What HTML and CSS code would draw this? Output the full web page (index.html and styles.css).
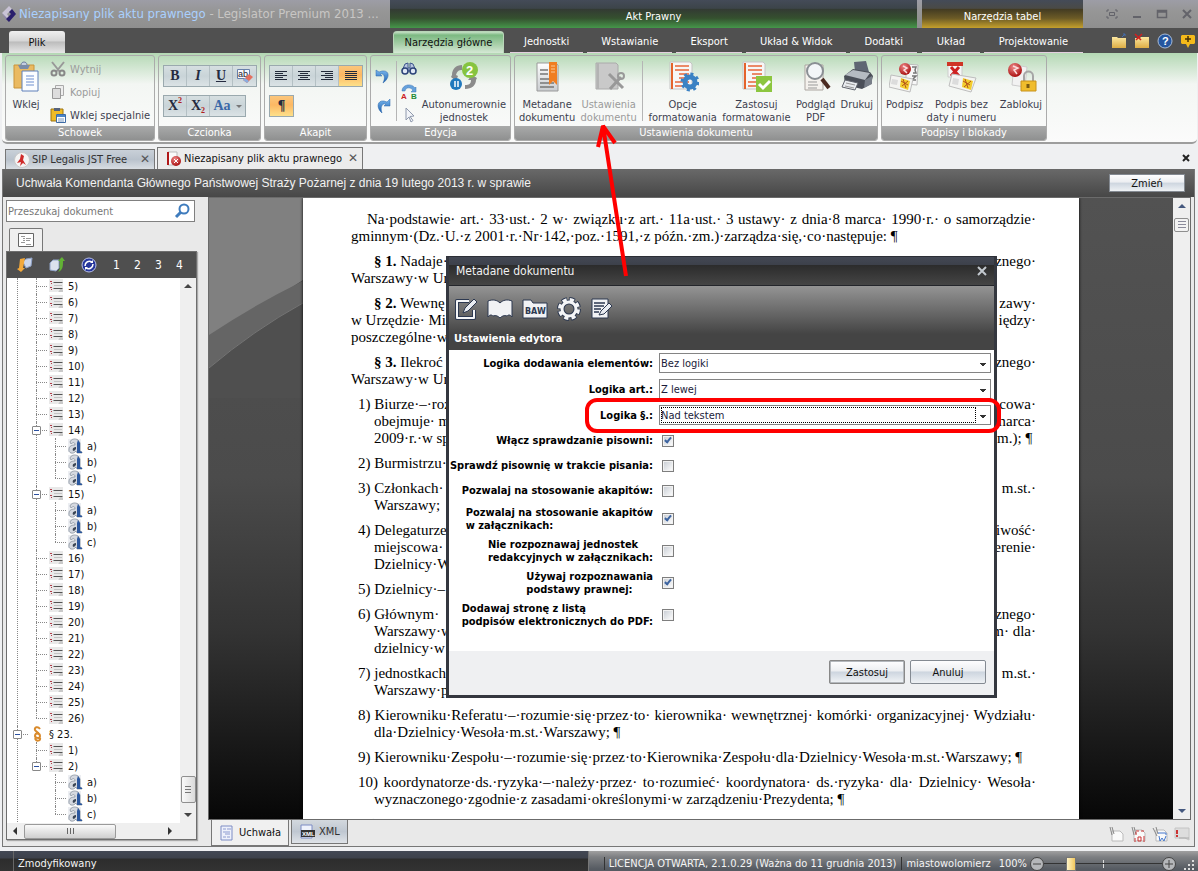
FILE: index.html
```html
<!DOCTYPE html>
<html lang="pl">

<head>
  <meta charset="UTF-8">
  <meta name="viewport" content="width=device-width, initial-scale=1.0">
  <title>Niezapisany plik aktu prawnego - Legislator Premium 2013</title>
  <link rel="stylesheet" href="styles.css">
</head>

<body>
  <svg class="sprite" width="0" height="0" aria-hidden="true">
    <defs>
      <linearGradient id="g-blue" x1="0" y1="0" x2="0" y2="1">
        <stop offset="0" stop-color="#7ab8ee" />
        <stop offset="1" stop-color="#1d5fae" />
      </linearGradient>
      <linearGradient id="g-gold" x1="0" y1="0" x2="0" y2="1">
        <stop offset="0" stop-color="#fbe7a0" />
        <stop offset="1" stop-color="#dfae45" />
      </linearGradient>
      <linearGradient id="g-light" x1="0" y1="0" x2="0" y2="1">
        <stop offset="0" stop-color="#ffffff" />
        <stop offset="1" stop-color="#c9ccd0" />
      </linearGradient>
      <radialGradient id="g-red" cx=".4" cy=".3" r=".7">
        <stop offset="0" stop-color="#e88" />
        <stop offset="1" stop-color="#a11" />
      </radialGradient>
    </defs>
    <symbol id="i-list" viewBox="0 0 16 16">
      <path d="M1 1h14v13l-3-2-3 2H1z" fill="#e9e9e9" />
      <path d="M10 14l3-4 2 2v2z" fill="#c9c9c9" />
      <path d="M5.500 4.500h9M5.500 10.500h9" stroke="#555" />
      <path d="M6 7.500h8" stroke="#c4c4c4" />
      <path d="M2 3.500h2M3 5.500h1M2 9.500h2M3 11.500h1" stroke="#b23c4a" />
    </symbol>
    <symbol id="i-letter" viewBox="0 0 16 16">
      <path d="M1 1h13v13H1z" fill="#eceef2" />
      <path d="M3 4c1-3 5-4 8-2l2 3v8l2 1v1h-5l-1-2c-3 4-8 2-7-2 0-3 3-4 6-4 0-3-2-3-4-1z" fill="#d5d9e0" stroke="#7d8694" stroke-width=".7" />
      <path d="M11 2l2 3v8l2 1v1h-5V5z" fill="#2b579e" />
      <path d="M9 9c-4 0-4 4-2 4l2-2z" fill="#3a4554" />
    </symbol>
    <symbol id="i-section" viewBox="0 0 16 16">
      <path d="M11 3C9 0 5 1 6 4c1 2 5 3 5 6s-5 2-5 0 2-3 4-3M10 8c-3-1-4 0-4 2M6 12c1 4 6 3 5 0" fill="none" stroke="#d98a2b" stroke-width="2" />
    </symbol>
    <symbol id="i-seal" viewBox="0 0 32 32">
      <path d="M17 3l12 1-1 20-11-1z" fill="#f7f7f7" stroke="#bbb" />
      <path d="M23 6h4l-1 3 1 3h-3M23 15h4l-4 4h4" stroke="#777" stroke-width="1.500" fill="none" />
      <circle cx="16" cy="8" r="6" fill="url(#g-red)" />
      <path d="M14 5l4 2-3 2 3 3" stroke="#fbdcdc" stroke-width="1.500" fill="none" />
      <path d="M2 14l22 4-3 13-21-5z" fill="#f4f4f2" stroke="#bdbdbd" />
      <path d="M3 18l6 1-1 5-6-1z" fill="#dcdcdc" />
      <path d="M12 17l9 3-2 9-8-3z" fill="#f2cc2c" />
      <path d="M12 20l7 4M14 18l3 9M19 20l-6 5" stroke="#b5531c" />
    </symbol>
    <symbol id="i-lines" viewBox="0 0 32 32">
      <path d="M3 1h20l2 2v25H3z" fill="#f6f6f6" stroke="#c4c4c4" />
      <path d="M5 2v26" stroke="#e4632b" stroke-width="2" />
      <path d="M8 5h14M8 9h14M12 13h10M12 17h10M8 21h14M8 25h10" stroke="#e8663a" stroke-width="1.500" />
    </symbol>
  </svg>

  <div class="app">
    <header class="title">
      <div class="title__main">
        <svg class="title__logo" viewBox="0 0 16 18">
          <path d="M1 8L8 1l3 3-5 5 2 3-3 2z" fill="#c9c3d6" />
          <path d="M1 8l5 5-1 2z" fill="#8d85a5" />
          <path d="M11 4l4 5-7 8-3-3 5-5-2-2z" fill="#2a1f6c" />
        </svg>
        <h1 class="title__text"><span>Niezapisany plik aktu prawnego</span> - Legislator Premium 2013 ...</h1>
      </div>
      <div class="title__context title__context--act">Akt Prawny</div>
      <div class="title__context title__context--table">Narzędzia tabel</div>
      <div class="title__window">
        <button class="title__btn" aria-label="Pełny ekran"><svg viewBox="0 0 12 10"><path d="M1 3V1h2M9 1h2v2M11 7v2H9M3 9H1V7M3.500 3.500h5v3h-5z" /></svg></button>
        <button class="title__btn" aria-label="Minimalizuj"><svg viewBox="0 0 12 10"><path d="M2 8h8" stroke-width="2" /></svg></button>
        <button class="title__btn" aria-label="Maksymalizuj"><svg viewBox="0 0 12 10"><path d="M1.500 1.500h9v7h-9zM1 3h10" stroke-width="1.500" /></svg></button>
        <button class="title__btn" aria-label="Zamknij"><svg viewBox="0 0 12 10"><path d="M2 1l8 8M10 1L2 9" stroke-width="2" /></svg></button>
      </div>
    </header>

    <nav class="tabs">
      <div class="tabs__file"><button class="tabs__plik">Plik</button></div>
      <div class="tabs__group tabs__group--act">
        <button class="tabs__tab tabs__tab--active">Narzędzia główne</button>
        <button class="tabs__tab">Jednostki</button>
        <button class="tabs__tab">Wstawianie</button>
        <button class="tabs__tab">Eksport</button>
        <button class="tabs__tab">Układ &amp; Widok</button>
        <button class="tabs__tab">Dodatki</button>
      </div>
      <div class="tabs__group tabs__group--table">
        <button class="tabs__tab">Układ</button>
        <button class="tabs__tab">Projektowanie</button>
      </div>
      <div class="tabs__quick">
        <button class="icon-btn" aria-label="Otwórz"><svg viewBox="0 0 16 16"><path d="M1 4h5l1 1h8v10H1z" fill="url(#g-gold)" /><path d="M11 4l3-3M12 1h2v2" stroke="#456fb0" fill="none" /></svg></button>
        <button class="icon-btn" aria-label="Zamknij plik"><svg viewBox="0 0 16 16"><path d="M1 5h5l1-1h8v11H1z" fill="url(#g-gold)" /><path d="M1 1l6 6M8 1L2 7" stroke="#d11f1f" stroke-width="1.500" /></svg></button>
        <button class="icon-btn" aria-label="Pomoc"><svg viewBox="0 0 16 16"><circle cx="8" cy="8" r="7" fill="#2456a0" stroke="#a9bbd4" /><text x="5" y="12" class="svg-help">?</text></svg></button>
        <button class="icon-btn" aria-label="Nowości"><svg viewBox="0 0 16 16"><path d="M2 2h12l1 1v7l-1 1H10l-2 4-2-4H2l-1-1V3z" fill="#f5ba1a" /><path d="M8 3v6M5 6h6" stroke="#463006" stroke-width="1.500" /></svg></button>
      </div>
    </nav>

    <section class="ribbon">
      <div class="group group--clipboard">
        <div class="group__body">
          <button class="big">
            <svg class="big__icon" viewBox="0 0 32 32">
              <path d="M4 4h20v23H4z" fill="#eaba61" stroke="#c9943b" />
              <path d="M8 4h12l-2 4h-8z" fill="#7a8ca8" />
              <path d="M11 4c0-4 6-4 6 0" fill="#c3cde0" stroke="#6c7f9e" />
              <path d="M12 10h16v20H12z" fill="#fbfdff" stroke="#5f80b9" />
              <path d="M16 15h8M16 18h8M16 21h8M16 24h8" stroke="#6c8fd0" />
            </svg>
            <span>Wklej</span>
          </button>
          <div class="group__stack">
            <button class="small" disabled><svg viewBox="0 0 16 16"><path d="M2 1l8 10M14 1L6 11" stroke="#999" stroke-width="2" /><circle cx="4" cy="12" r="2.500" fill="none" stroke="#888" stroke-width="2" /><circle cx="12" cy="12" r="2.500" fill="none" stroke="#888" stroke-width="2" /></svg>Wytnij</button>
            <button class="small" disabled><svg viewBox="0 0 16 16"><path d="M5.500 1.500h8v10h-8z" fill="#eee" stroke="#aaa" /><path d="M2.500 4.500h8v10h-8z" fill="#ddd" stroke="#999" /></svg>Kopiuj</button>
            <button class="small"><svg viewBox="0 0 16 16"><path d="M1 2h12v12H1z" fill="#f0bb26" stroke="#9c7413" /><path d="M4 1h6v3H4z" fill="#56627a" /><path d="M6.500 7.500h9v8h-9z" fill="#fff" stroke="#3e6ba5" /><path d="M7 9h8" stroke="#4c86c9" stroke-width="2" /><path d="M8 12h6M8 14h6" stroke="#7b9bc4" /></svg>Wklej specjalnie</button>
          </div>
        </div>
        <h2 class="group__caption">Schowek</h2>
      </div>

      <div class="group group--font">
        <div class="group__body group__body--rows">
          <div class="bar">
            <button class="bar__btn bar__btn--b">B</button>
            <button class="bar__btn bar__btn--i">I</button>
            <button class="bar__btn bar__btn--u">U</button>
            <button class="bar__btn" aria-label="Wyczyść formatowanie"><svg viewBox="0 0 16 16"><path d="M.5 1.500h12v9H.5z" fill="#f7faff" stroke="#6880aa" /><text x="1" y="9" class="svg-ab">ab</text><path d="M6 12l6-6 4 3-6 6z" fill="#e4705f" /><path d="M6 12l2-2 4 3-2 2z" fill="#89aee0" /></svg></button>
          </div>
          <div class="bar">
            <button class="bar__btn">X<sup>2</sup></button>
            <button class="bar__btn">X<sub>2</sub></button>
            <button class="bar__btn bar__btn--case">Aa <i class="caret"></i></button>
          </div>
        </div>
        <h2 class="group__caption">Czcionka</h2>
      </div>

      <div class="group group--font">
        <div class="group__body group__body--rows">
          <div class="bar">
            <button class="bar__btn" aria-label="Do lewej"><svg viewBox="0 0 16 16"><path d="M2 3.500h12M2 5.500h8M2 7.500h12M2 9.500h8M2 11.500h12" stroke="#222a3a" /></svg></button>
            <button class="bar__btn" aria-label="Wyśrodkuj"><svg viewBox="0 0 16 16"><path d="M2 3.500h12M4 5.500h8M2 7.500h12M4 9.500h8M2 11.500h12" stroke="#222a3a" /></svg></button>
            <button class="bar__btn" aria-label="Do prawej"><svg viewBox="0 0 16 16"><path d="M2 3.500h12M6 5.500h8M2 7.500h12M6 9.500h8M2 11.500h12" stroke="#222a3a" /></svg></button>
            <button class="bar__btn bar__btn--on" aria-label="Wyjustuj"><svg viewBox="0 0 16 16"><path d="M2 3.500h12M2 5.500h12M2 7.500h12M2 9.500h12M2 11.500h12" stroke="#222a3a" /></svg></button>
          </div>
          <div class="bar">
            <button class="bar__btn bar__btn--on">¶</button>
          </div>
        </div>
        <h2 class="group__caption">Akapit</h2>
      </div>

      <div class="group group--edit">
        <div class="group__body">
          <div class="group__icons group__icons--wide">
            <button class="icon-btn" aria-label="Cofnij"><svg viewBox="0 0 16 16"><path d="M1 2v6h6L5 6c4-1 6 3 3 9 7-5 7-13-1-12L4 4z" fill="url(#g-blue)" stroke="#2b66ad" stroke-width=".5" /></svg></button>
            <button class="icon-btn" aria-label="Ponów"><svg viewBox="0 0 16 16"><path d="M15 1v7H9l2-2C7 5 5 9 7 15 1 10 2 2 9 3l3 1z" fill="url(#g-blue)" stroke="#2b66ad" stroke-width=".5" /></svg></button>
          </div>
          <i class="group__sep"></i>
          <div class="group__icons">
            <button class="icon-btn" aria-label="Znajdź"><svg viewBox="0 0 16 16"><path d="M4 3l3-1v5h2V2l3 1 3 7H1z" fill="#b8c5e0" stroke="#3e568c" /><circle cx="4" cy="10" r="3" fill="#dfe7f5" stroke="#2c4379" stroke-width="1.500" /><circle cx="12" cy="10" r="3" fill="#dfe7f5" stroke="#2c4379" stroke-width="1.500" /></svg></button>
            <button class="icon-btn" aria-label="Zamień"><svg viewBox="0 0 16 16"><path d="M1 7c0-7 10-8 13-3l1-1v5h-5l2-2C9 3 5 3 4 7z" fill="#66a1dc" stroke="#3974b4" stroke-width=".5" /><text x="0" y="15" class="svg-a">A</text><text x="10" y="15" class="svg-b">B</text></svg></button>
            <button class="icon-btn" aria-label="Zaznacz"><svg viewBox="0 0 16 16"><path d="M5 1l8 8-4 .5 3 4-2 1.500-2-5-3 3z" fill="#f2f4f8" stroke="#8e98ac" /></svg></button>
          </div>
          <button class="big">
            <svg class="big__icon" viewBox="0 0 32 32">
              <path d="M3 16l5 4 2-5-2-1c1-4 3-5 6-5V4C8 4 4 8 4 14z" fill="#8b8b8b" />
              <path d="M29 17l-5-3-4 5h3c0 4-2 5-6 5v4c7 0 11-4 11-9z" fill="#8b8b8b" />
              <circle cx="22" cy="9" r="8" fill="#86c440" />
              <circle cx="8" cy="23" r="6" fill="#2179bd" />
              <path d="M7 20v6M10 20v6" stroke="#fff" stroke-width="1.500" />
              <text x="18" y="14" class="svg-two">2</text>
            </svg>
            <span>Autonumerownie<br>jednostek</span>
          </button>
        </div>
        <h2 class="group__caption">Edycja</h2>
      </div>

      <div class="group group--doc">
        <div class="group__body">
          <button class="big">
            <svg class="big__icon" viewBox="0 0 32 32">
              <path d="M6 2h18l3 2v26H6z" fill="url(#g-light)" stroke="#999" />
              <path d="M9 9h8M9 13h8M9 18h14M9 22h14M9 26h14" stroke="#777" stroke-width="1.500" />
              <path d="M18 1h8v23l-4-4-4 4z" fill="#f07e22" />
              <path d="M20 5h4M20 8h4M20 11h4" stroke="#fbc896" />
            </svg>
            <span>Metadane<br>dokumentu</span>
          </button>
          <button class="big" disabled>
            <svg class="big__icon" viewBox="0 0 32 32">
              <path d="M3 2h20l2 2v24H3z" fill="#c9c9c9" stroke="#aaa" />
              <path d="M5 2v26" stroke="#b3b3b3" stroke-width="2" />
              <path d="M16 13l14 14M17 28l11-12" stroke="#999" stroke-width="3" />
              <circle cx="28" cy="15" r="3" fill="none" stroke="#999" stroke-width="2" />
            </svg>
            <span>Ustawienia<br>dokumentu</span>
          </button>
          <i class="group__sep"></i>
          <button class="big">
            <svg class="big__icon" viewBox="0 0 32 32">
              <use href="#i-lines" />
              <circle cx="23" cy="21" r="5" fill="none" stroke="#3b82c4" stroke-width="5" />
              <circle cx="23" cy="21" r="8" fill="none" stroke="#3b82c4" stroke-width="3" stroke-dasharray="3 3.300" />
            </svg>
            <span>Opcje<br>formatowania</span>
          </button>
          <button class="big">
            <svg class="big__icon" viewBox="0 0 32 32">
              <use href="#i-lines" />
              <path d="M16 15h16v16H16z" fill="#8cc63f" />
              <path d="M19 23l4 4 7-7" stroke="#fff" stroke-width="3" fill="none" />
            </svg>
            <span>Zastosuj<br>formatowanie</span>
          </button>
          <button class="big">
            <svg class="big__icon" viewBox="0 0 32 32">
              <path d="M5 4h18v25H5z" fill="#f4f1ed" stroke="#aba5a0" />
              <path d="M8 21h9M8 24h10M8 27h9" stroke="#999" />
              <path d="M22 18l7 9" stroke="#4a2a20" stroke-width="4" />
              <circle cx="15" cy="10" r="8" fill="#f3f6f8" stroke="#8a8f94" stroke-width="2" />
            </svg>
            <span>Podgląd<br>PDF</span>
          </button>
          <button class="big">
            <svg class="big__icon" viewBox="0 0 32 32">
              <path d="M13 1l12-1 3 11H14z" fill="#5f6673" />
              <path d="M3 15l9-7 17 3 3 4-2 8-9 5-17-4z" fill="#4b4f58" />
              <path d="M4 14l8-5 17 3-5 7z" fill="#b6bbc2" />
              <path d="M24 19l7-4v8l-8 4z" fill="#787e88" />
              <path d="M4 19l13 3-3 7-13-3z" fill="#e9ecef" stroke="#61656d" />
              <path d="M5 22l9 2M4 25l9 2" stroke="#999" />
            </svg>
            <span>Drukuj</span>
          </button>
        </div>
        <h2 class="group__caption">Ustawienia dokumentu</h2>
      </div>

      <div class="group group--sign">
        <div class="group__body">
          <button class="big">
            <svg class="big__icon" viewBox="0 0 32 32"><use href="#i-seal" /></svg>
            <span>Podpisz</span>
          </button>
          <button class="big">
            <svg class="big__icon" viewBox="0 0 32 32">
              <path d="M3 2h14v14H3z" fill="#f6f6f6" stroke="#ccc" />
              <path d="M2 1h16v4H2z" fill="#cf3426" />
              <path d="M6 6l8 9M14 6l-8 9" stroke="#cf2020" stroke-width="3" />
              <path d="M7 13l24 4-5 14L4 25z" fill="#f4f4f2" stroke="#bdbdbd" />
              <path d="M8 17l6 1-1 6-6-1z" fill="#dcdcdc" />
              <path d="M18 17l10 3-2 9-9-3z" fill="#f2cc2c" />
              <path d="M18 20l7 4M20 18l3 9M26 20l-7 6" stroke="#b5531c" />
            </svg>
            <span>Podpis bez<br>daty i numeru</span>
          </button>
          <button class="big">
            <svg class="big__icon" viewBox="0 0 32 32">
              <path d="M9 4l13 2-2 20-13-2z" fill="#f2f2f2" stroke="#ccc" />
              <circle cx="10" cy="9" r="7" fill="url(#g-red)" />
              <path d="M8 5l5 2-4 2 3 4" stroke="#fbdcdc" stroke-width="1.500" fill="none" />
              <path d="M19 21v-6c0-6 9-6 9 0v6" fill="none" stroke="#a6a6a6" stroke-width="2" />
              <path d="M16 20h15v10H16z" fill="#f0bd2d" stroke="#c8921a" />
              <path d="M23 23v4" stroke="#7b5a11" stroke-width="3" />
            </svg>
            <span>Zablokuj</span>
          </button>
        </div>
        <h2 class="group__caption">Podpisy i blokady</h2>
      </div>
    </section>

    <nav class="files">
      <button class="files__tab">
        <svg viewBox="0 0 16 16"><circle cx="8" cy="8" r="7.500" fill="#f4f4f4" stroke="#c9c9c9" /><path d="M7 2l3 2-1 4 3 5-3-2-3 3 1-4-4 1 3-4z" fill="#cf2a2a" /></svg>
        SIP Legalis JST Free <span class="files__x">✕</span>
      </button>
      <button class="files__tab files__tab--active">
        <svg viewBox="0 0 16 16"><path d="M2 1h9v13H2z" fill="#fafafa" stroke="#bbb" /><path d="M2 1v13" stroke="#b01818" stroke-width="2" /><circle cx="10" cy="10" r="5" fill="url(#g-red)" /><path d="M8 8l4 4M12 8l-4 4" stroke="#fff" /></svg>
        Niezapisany plik aktu prawnego <span class="files__x">✕</span>
      </button>
      <button class="files__close" aria-label="Zamknij kartę"><svg viewBox="0 0 8 8"><path d="M1 1l6 6M7 1L1 7" stroke="#222" stroke-width="2" /></svg></button>
    </nav>

    <main class="work">
      <div class="work__head">
        <p class="work__name">Uchwała Komendanta Głównego Państwowej Straży Pożarnej z dnia 19 lutego 2013 r. w sprawie</p>
        <button class="push push--flat">Zmień</button>
      </div>

      <div class="work__body">
        <aside class="side">
          <div class="search">
            <input class="search__input" type="text" placeholder="Przeszukaj dokument" aria-label="Przeszukaj dokument">
            <svg class="search__icon" viewBox="0 0 16 16"><circle cx="10" cy="6" r="4.500" fill="none" stroke="#3f7cbd" stroke-width="2" /><path d="M7 9l-5 5" stroke="#3f7cbd" stroke-width="3" /></svg>
          </div>
          <button class="side__tab" aria-label="Struktura"><svg viewBox="0 0 16 14"><path d="M.5.500h15v13H.5z" fill="#fff" stroke="#666" /><path d="M3 3.500h4M5 5.500h2M8 5.500h5M5 7.500h2M8 7.500h4M3 9.500h4M8 11.500h5" stroke="#999" /></svg></button>
          <div class="panel">
            <div class="panel__bar">
              <button class="icon-btn" aria-label="Zwiń"><svg viewBox="0 0 16 16"><path d="M6 5l3-3 6-1-1 8-5 2z" fill="#ccd6ea" stroke="#8fa2c7" /><path d="M3 2l5-1-2 10 2 0-4 4-4-3 2-1z" fill="#f3a93b" /></svg></button>
              <button class="icon-btn" aria-label="Rozwiń"><svg viewBox="0 0 16 16"><path d="M1 6l3-3h6v8l-3 3-6-1z" fill="#dbe2ee" stroke="#8fa2c7" /><path d="M9 15c3-3 1-6 2-11H9l4-4 3 4h-2c0 5 0 9-5 11z" fill="#62b235" /></svg></button>
              <button class="icon-btn" aria-label="Odśwież"><svg viewBox="0 0 16 16"><circle cx="8" cy="8" r="7" fill="#27379c" stroke="#b9c1e8" /><path d="M4 9c0-4 4-6 7-4M12 7c0 4-4 6-7 4" fill="none" stroke="#fff" stroke-width="1.500" /><path d="M9 6l3 0V3zM7 10H4v3z" fill="#fff" /></svg></button>
              <button class="panel__level">1</button>
              <button class="panel__level">2</button>
              <button class="panel__level">3</button>
              <button class="panel__level">4</button>
            </div>
            <div class="panel__view">
              <ul class="tree">
                <li class="tree__node">
                  <ul class="tree__sub">
                    <li class="tree__node"><span class="tree__row"><svg><use href="#i-list" /></svg>5)</span></li>
                    <li class="tree__node"><span class="tree__row"><svg><use href="#i-list" /></svg>6)</span></li>
                    <li class="tree__node"><span class="tree__row"><svg><use href="#i-list" /></svg>7)</span></li>
                    <li class="tree__node"><span class="tree__row"><svg><use href="#i-list" /></svg>8)</span></li>
                    <li class="tree__node"><span class="tree__row"><svg><use href="#i-list" /></svg>9)</span></li>
                    <li class="tree__node"><span class="tree__row"><svg><use href="#i-list" /></svg>10)</span></li>
                    <li class="tree__node"><span class="tree__row"><svg><use href="#i-list" /></svg>11)</span></li>
                    <li class="tree__node"><span class="tree__row"><svg><use href="#i-list" /></svg>12)</span></li>
                    <li class="tree__node"><span class="tree__row"><svg><use href="#i-list" /></svg>13)</span></li>
                    <li class="tree__node"><span class="tree__row tree__row--open"><svg><use href="#i-list" /></svg>14)</span>
                      <ul class="tree__sub">
                        <li class="tree__node"><span class="tree__row"><svg><use href="#i-letter" /></svg>a)</span></li>
                        <li class="tree__node"><span class="tree__row"><svg><use href="#i-letter" /></svg>b)</span></li>
                        <li class="tree__node"><span class="tree__row"><svg><use href="#i-letter" /></svg>c)</span></li>
                      </ul>
                    </li>
                    <li class="tree__node"><span class="tree__row tree__row--open"><svg><use href="#i-list" /></svg>15)</span>
                      <ul class="tree__sub">
                        <li class="tree__node"><span class="tree__row"><svg><use href="#i-letter" /></svg>a)</span></li>
                        <li class="tree__node"><span class="tree__row"><svg><use href="#i-letter" /></svg>b)</span></li>
                        <li class="tree__node"><span class="tree__row"><svg><use href="#i-letter" /></svg>c)</span></li>
                      </ul>
                    </li>
                    <li class="tree__node"><span class="tree__row"><svg><use href="#i-list" /></svg>16)</span></li>
                    <li class="tree__node"><span class="tree__row"><svg><use href="#i-list" /></svg>17)</span></li>
                    <li class="tree__node"><span class="tree__row"><svg><use href="#i-list" /></svg>18)</span></li>
                    <li class="tree__node"><span class="tree__row"><svg><use href="#i-list" /></svg>19)</span></li>
                    <li class="tree__node"><span class="tree__row"><svg><use href="#i-list" /></svg>20)</span></li>
                    <li class="tree__node"><span class="tree__row"><svg><use href="#i-list" /></svg>21)</span></li>
                    <li class="tree__node"><span class="tree__row"><svg><use href="#i-list" /></svg>22)</span></li>
                    <li class="tree__node"><span class="tree__row"><svg><use href="#i-list" /></svg>23)</span></li>
                    <li class="tree__node"><span class="tree__row"><svg><use href="#i-list" /></svg>24)</span></li>
                    <li class="tree__node"><span class="tree__row"><svg><use href="#i-list" /></svg>25)</span></li>
                    <li class="tree__node"><span class="tree__row"><svg><use href="#i-list" /></svg>26)</span></li>
                  </ul>
                </li>
                <li class="tree__node tree__node--on"><span class="tree__row tree__row--open"><svg><use href="#i-section" /></svg>§ 23.</span>
                  <ul class="tree__sub">
                    <li class="tree__node"><span class="tree__row"><svg><use href="#i-list" /></svg>1)</span></li>
                    <li class="tree__node"><span class="tree__row tree__row--open"><svg><use href="#i-list" /></svg>2)</span>
                      <ul class="tree__sub">
                        <li class="tree__node"><span class="tree__row"><svg><use href="#i-letter" /></svg>a)</span></li>
                        <li class="tree__node"><span class="tree__row"><svg><use href="#i-letter" /></svg>b)</span></li>
                        <li class="tree__node"><span class="tree__row"><svg><use href="#i-letter" /></svg>c)</span></li>
                      </ul>
                    </li>
                  </ul>
                </li>
              </ul>
              <div class="vscroll vscroll--low">
                <i class="arrow arrow--up"></i>
                <i class="vscroll__thumb"></i>
                <i class="arrow arrow--down"></i>
              </div>
            </div>
            <div class="hscroll">
              <i class="arrow arrow--left"></i>
              <i class="hscroll__thumb"></i>
              <i class="arrow arrow--right"></i>
            </div>
          </div>
        </aside>

        <section class="editor">
          <div class="editor__view">
            <div class="desk">
              <svg class="desk__curve" viewBox="0 0 964 200" preserveAspectRatio="xMinYMin slice" aria-hidden="true">
                <path d="M0 0H500L94 82Q40 115 0 170z" fill="#808080" />
                <path d="M0 137Q45 107 94 83V105Q45 132 0 170z" fill="#656565" />
                <path d="M0 170Q45 132 94 105V200H0z" fill="#4f4f4f" />
                <path d="M0 170Q45 132 94 105" fill="none" stroke="#747474" />
              </svg>
              <article class="paper">
                <div class="para para--lead">
                  <p class="line">Na·podstawie· art.· 33·ust.· 2 w· związku·z art.· 11a·ust.· 3 ustawy· z dnia·8 marca· 1990·r.· o samorządzie·</p>
                  <p class="line line--end">gminnym·(Dz.·U.·z 2001·r.·Nr·142,·poz.·1591,·z późn.·zm.)·zarządza·się,·co·następuje: ¶</p>
                </div>
                <div class="para para--section">
                  <p class="line line--cut"><span><b>§ 1.</b> Nadaje·</span><span>znego·</span></p>
                  <p class="line line--end">Warszawy·w Urz</p>
                </div>
                <div class="para para--section">
                  <p class="line line--cut"><span><b>§ 2.</b> Wewnę</span><span>zawy·</span></p>
                  <p class="line line--cut"><span>w Urzędzie· Mia</span><span>iędzy·</span></p>
                  <p class="line line--end">poszczególne·w</p>
                </div>
                <div class="para para--section">
                  <p class="line line--cut"><span><b>§ 3.</b> Ilekroć</span><span>znego·</span></p>
                  <p class="line line--end">Warszawy·w Urz</p>
                </div>
                <div class="para para--item">
                  <p class="line line--cut"><span>1) Biurze·–·roz</span><span>cowa·</span></p>
                  <p class="line line--cut"><span>obejmuje· m</span><span>marca·</span></p>
                  <p class="line line--cut"><span>2009·r.·w spr</span><span>m.); ¶&nbsp;</span></p>
                </div>
                <div class="para para--item">
                  <p class="line line--end">2) Burmistrzu·</p>
                </div>
                <div class="para para--item">
                  <p class="line line--cut"><span>3) Członkach·</span><span>m.st.·</span></p>
                  <p class="line line--end">Warszawy;</p>
                </div>
                <div class="para para--item">
                  <p class="line line--cut"><span>4) Delegaturze</span><span>iwość·</span></p>
                  <p class="line line--cut"><span>miejscowa·</span><span>erenie·</span></p>
                  <p class="line line--end">Dzielnicy·W</p>
                </div>
                <div class="para para--item">
                  <p class="line line--end">5) Dzielnicy·–·</p>
                </div>
                <div class="para para--item">
                  <p class="line line--cut"><span>6) Głównym·</span><span>znego·</span></p>
                  <p class="line line--cut"><span>Warszawy·w</span><span>m· dla·</span></p>
                  <p class="line line--end">dzielnicy·w</p>
                </div>
                <div class="para para--item">
                  <p class="line line--cut"><span>7) jednostkach</span><span>m.st.·</span></p>
                  <p class="line line--end">Warszawy·p</p>
                </div>
                <div class="para para--item">
                  <p class="line">8) Kierowniku·Referatu·–·rozumie·się·przez·to· kierownika· wewnętrznej· komórki· organizacyjnej· Wydziału·</p>
                  <p class="line line--end">dla·Dzielnicy·Wesoła·m.st.·Warszawy; ¶</p>
                </div>
                <div class="para para--item">
                  <p class="line line--end">9) Kierowniku·Zespołu·–·rozumie·się·przez·to·Kierownika·Zespołu·dla·Dzielnicy·Wesoła·m.st.·Warszawy; ¶</p>
                </div>
                <div class="para para--item">
                  <p class="line">10) koordynatorze·ds.·ryzyka·–·należy·przez· to·rozumieć· koordynatora· ds.·ryzyka· dla· Dzielnicy· Wesoła·</p>
                  <p class="line line--end">wyznaczonego·zgodnie·z zasadami·określonymi·w zarządzeniu·Prezydenta; ¶</p>
                </div>
                <div class="para para--item">
                  <p class="line">11) koordynatorach· komórek· Urzędu· Dzielnicy· –· rozumie· się· Wydziały· dla· Dzielnicy· Wesoła·</p>
                </div>
              </article>
            </div>
            <div class="vscroll vscroll--doc">
              <i class="arrow arrow--up"></i>
              <i class="vscroll__thumb"></i>
              <i class="arrow arrow--down"></i>
            </div>
          </div>
          <div class="editor__foot">
            <button class="view-tab view-tab--active"><svg viewBox="0 0 16 16"><path d="M2 1h11v14H2z" fill="#eef1fb" stroke="#7d8cc4" /><path d="M4 4h3M8 4h4M4 7h7M6 9h5M4 12h3M8 12h3" stroke="#8d9bd0" /></svg>Uchwała</button>
            <button class="view-tab"><svg viewBox="0 0 16 16"><path d="M2 1h11v13H2z" fill="#eef1fb" stroke="#7d8cc4" /><path d="M2 6h14v7H2z" fill="#333" /><text x="3" y="12" class="svg-xml">XML</text></svg>XML</button>
            <div class="editor__tools">
              <svg viewBox="0 0 16 16"><path d="M4 5h8l3 3v7H4z" fill="#fafafa" stroke="#bbb" /><path d="M2 1l2 8M4 1l2 7" stroke="#888" fill="none" /></svg>
              <svg viewBox="0 0 16 16"><path d="M4 4h8l3 3v8H4z" fill="#fafafa" stroke="#bbb" /><path d="M2 1l2 8M4 1l2 7" stroke="#888" /><path d="M6 5h3M11 5h3M6 9v-3M5 12v4M8 11h3v4H8zM14 10v6" fill="none" stroke="#c33" /></svg>
              <svg viewBox="0 0 16 16"><path d="M4 4h8l3 3v8H4z" fill="#fafafa" stroke="#bbb" /><path d="M1 2l4 8M4 1l2 7" stroke="#888" /><path d="M6 7h8v2M7 10l1 5 2-3 2 3 2-5" fill="none" stroke="#47c" /></svg>
              <svg viewBox="0 0 16 16"><path d="M1 2h14v12l-4-2H1z" fill="#ddd" stroke="#c4c4c4" /><path d="M3 4v4M3 9v2" stroke="#c33" stroke-width="2" /><path d="M5 12h10" stroke="#aaa" /></svg>
            </div>
          </div>
        </section>
      </div>
    </main>

    <footer class="status">
      <div class="status__state">Zmodyfikowany</div>
      <div class="status__info">
        <span class="status__cell">LICENCJA OTWARTA, 2.1.0.29 (Ważna do 11 grudnia 2013)</span>
        <span class="status__cell">miastowolomierz</span>
        <label class="status__zoom" for="zoom">100%</label>
        <button class="round" aria-label="Pomniejsz"><svg viewBox="0 0 14 14"><circle cx="7" cy="7" r="6.500" /><path d="M3 7h8" /></svg></button>
        <input class="zoom" id="zoom" type="range" min="10" max="400" value="90">
        <button class="round" aria-label="Powiększ"><svg viewBox="0 0 14 14"><circle cx="7" cy="7" r="6.500" /><path d="M3 7h8M7 3v8" /></svg></button>
        <svg class="status__grip" viewBox="0 0 12 12"><path d="M8 2h2v2H8zM4 6h2v2H4zM8 6h2v2H8zM0 10h2v2H0zM4 10h2v2H4zM8 10h2v2H8z" fill="#ddd" /></svg>
      </div>
    </footer>
  </div>

  <div class="dialog" role="dialog" aria-labelledby="dialog-title">
    <div class="dialog__title">
      <h2 id="dialog-title">Metadane dokumentu</h2>
      <button class="dialog__close" aria-label="Zamknij"><svg viewBox="0 0 10 10"><path d="M1 1l8 8M9 1L1 9" stroke="#c3c9cf" stroke-width="2" /></svg></button>
    </div>
    <div class="dialog__tools">
      <div class="dialog__icons">
        <button aria-label="Edycja"><svg viewBox="0 0 24 24"><path d="M20 13v8H3V4h12" fill="none" stroke="#2c3850" stroke-width="4" stroke-linejoin="round" /><path d="M20 13v8H3V4h12" fill="none" stroke="#f4f5f7" stroke-width="2" stroke-linejoin="round" /><path d="M9 16l2-5 9-9 3 3-9 9z" fill="#e9ecf1" stroke="#2c3850" /></svg></button>
        <button aria-label="Słownik"><svg viewBox="0 0 26 24"><path d="M1 4c5-2 9-1 12 2 3-3 7-4 12-2v16c-2-3-4-2-5-1-3-1-5 0-7 2-2-2-4-3-7-2-1-1-3-2-5 1z" fill="#f1f2f4" stroke="#2c3850" /></svg></button>
        <button aria-label="BAW"><svg viewBox="0 0 26 24"><path d="M1 3h8l2 3h14v15H1z" fill="#f1f2f4" stroke="#2c3850" stroke-linejoin="round" /><text x="3" y="17" class="svg-baw">BAW</text></svg></button>
        <button aria-label="Ustawienia edytora"><svg viewBox="0 0 24 24"><circle cx="12" cy="12" r="9" fill="none" stroke="#2c3850" stroke-width="6" stroke-dasharray="5 2.070" /><circle cx="12" cy="12" r="7" fill="none" stroke="#2c3850" stroke-width="5" /><circle cx="12" cy="12" r="9" fill="none" stroke="#f4f5f7" stroke-width="4" stroke-dasharray="4 3.070" stroke-dashoffset="-.5" /><circle cx="12" cy="12" r="7" fill="none" stroke="#f4f5f7" stroke-width="3" /></svg></button>
        <button aria-label="Notatki"><svg viewBox="0 0 24 24"><path d="M2 2h16v19H2z" fill="#f1f2f4" stroke="#2c3850" stroke-linejoin="round" /><path d="M4 6h11M4 9h10M4 12h7M4 15h5" stroke="#2c3850" stroke-width="1.500" /><path d="M9 18l2-4 8-8 3 3-8 8z" fill="#e9ecf1" stroke="#2c3850" /></svg></button>
      </div>
      <h3 class="dialog__heading">Ustawienia edytora</h3>
    </div>
    <form class="form">
      <label class="form__label" for="f-logic">Logika dodawania elementów:</label>
      <select class="form__select" id="f-logic"><option>Bez logiki</option></select>
      <label class="form__label" for="f-art">Logika art.:</label>
      <select class="form__select" id="f-art"><option>Z lewej</option></select>
      <label class="form__label" for="f-par">Logika §.:</label>
      <div class="form__mark">
        <select class="form__select" id="f-par"><option>Nad tekstem</option></select>
      </div>
      <label class="form__label" for="f-spell">Włącz sprawdzanie pisowni:</label>
      <input class="form__check" type="checkbox" id="f-spell" checked>
      <label class="form__label" for="f-live">Sprawdź pisownię w trakcie pisania:</label>
      <input class="form__check" type="checkbox" id="f-live">
      <label class="form__label" for="f-par1">Pozwalaj na stosowanie akapitów:</label>
      <input class="form__check" type="checkbox" id="f-par1">
      <label class="form__label" for="f-par2">Pozwalaj na stosowanie akapitów<br>w załącznikach:</label>
      <input class="form__check" type="checkbox" id="f-par2" checked>
      <label class="form__label" for="f-units">Nie rozpoznawaj jednostek<br>redakcyjnych w załącznikach:</label>
      <input class="form__check" type="checkbox" id="f-units">
      <label class="form__label" for="f-basis">Używaj rozpoznawania<br>podstawy prawnej:</label>
      <input class="form__check" type="checkbox" id="f-basis" checked>
      <label class="form__label" for="f-pdf">Dodawaj stronę z listą<br>podpisów elektronicznych do PDF:</label>
      <input class="form__check" type="checkbox" id="f-pdf">
    </form>
    <div class="dialog__foot">
      <button class="push push--default">Zastosuj</button>
      <button class="push">Anuluj</button>
    </div>
  </div>

  <svg class="pointer" viewBox="0 0 40 160" aria-hidden="true">
    <path d="M31 154L8 4M3 25L8 4l12 17" fill="none" stroke="#f00" stroke-width="4" stroke-linejoin="bevel" />
  </svg>
</body>

</html>
```

FILE: styles.css
```css
*,
*::before,
*::after {
  margin: 0;
  padding: 0;
  box-sizing: border-box;
}

body {
  font: 11px/13px "DejaVu Sans Condensed", "Noto Sans", sans-serif;
  color: #111;
  background: #eff0f2;
  overflow: hidden;
}

button,
input,
select {
  font: inherit;
  color: inherit;
  border: 0;
  background: none;
}

h1,
h2,
h3 {
  font-size: inherit;
  font-weight: normal;
}

ul {
  list-style: none;
}

svg {
  display: block;
  flex: none;
}

.sprite {
  position: absolute;
}

.app {
  display: flex;
  flex-direction: column;
  height: 100vh;
}

.icon-btn,
.icon-btn svg {
  display: block;
  width: 16px;
  height: 16px;
}

/* svg labels */
.svg-help {
  font: bold 11px "Liberation Sans", sans-serif;
  fill: #fff;
}

.svg-ab {
  font: 9px "Liberation Sans", sans-serif;
  fill: #223;
}

.svg-a,
.svg-b {
  font: bold 8px "Liberation Sans", sans-serif;
  fill: #c22;
}

.svg-b {
  fill: #283;
}

.svg-two {
  font: bold 13px "Liberation Sans", sans-serif;
  fill: #fff;
}

.svg-xml {
  font: bold 6px "Liberation Sans", sans-serif;
  fill: #fff;
}

.svg-baw {
  font: bold 8px "DejaVu Sans", sans-serif;
  fill: #2c3850;
}

/* title bar */
.title {
  display: flex;
  flex: 0 0 28px;
  background: linear-gradient(#9d9da6, #969696 40%, #8f8f8f);
}

.title__main {
  display: flex;
  flex: 0 0 390px;
  align-items: center;
  gap: 2px;
  min-width: 0;
  padding-left: 1px;
}

.title__logo {
  width: 16px;
  height: 18px;
}

.title__text {
  font-size: 13px;
  line-height: 20px;
  color: #c8c6c4;
  white-space: nowrap;
}

.title__text span {
  color: #a9d0ff;
}

.title__context {
  display: flex;
  align-items: center;
  justify-content: center;
  padding-top: 4px;
  color: #fff;
}

.title__context--act {
  flex: 0 0 527px;
  background: linear-gradient(#444b58, #3c4449 30%, #333a33 32%, #35502f 65%, #45964a);
}

.title__context--table {
  flex: 0 0 161px;
  margin-left: 5px;
  background: linear-gradient(#444b58, #4a4a46 30%, #423a22 32%, #6b5a26 65%, #c5a02c);
}

.title__window {
  display: flex;
  flex: 1;
  align-items: center;
  justify-content: flex-end;
  gap: 13px;
  padding-right: 5px;
}

.title__btn svg {
  width: 12px;
  height: 10px;
  fill: none;
  stroke: #63636a;
}

/* ribbon tabs */
.tabs {
  display: flex;
  flex: 0 0 25px;
  background: #505050;
}

.tabs__file {
  flex: 0 0 393px;
  padding: 3px 0 0 9px;
}

.tabs__plik {
  width: 56px;
  height: 22px;
  border-radius: 3px 3px 0 0;
  background: linear-gradient(#efefef, #d6d6d6 45%, #bcbcbc 50%, #e6e6e6);
}

.tabs__group {
  display: flex;
  gap: 4px;
  color: #fff;
}

.tabs__group--act {
  flex: 0 0 524px;
}

.tabs__group--table {
  flex: 0 0 161px;
  margin-left: 5px;
}

.tabs__tab {
  flex: 1 1 auto;
  padding-top: 2px;
  border-bottom: 1px solid #e3cfdf;
}

.tabs__tab--active {
  flex: 0 0 111px;
  margin: 3px 2px 0 0;
  padding: 0;
  color: #111;
  border: 1px solid #b9d6b9;
  border-bottom: 0;
  border-radius: 4px 4px 0 0;
  background: linear-gradient(#c4e0c4, #7cb982 15%, #a9d0aa 60%, #d5e8d5);
}

.tabs__quick {
  display: flex;
  flex: 1;
  align-items: center;
  justify-content: flex-end;
  gap: 7px;
  padding-right: 2px;
}

/* ribbon */
.ribbon {
  display: flex;
  flex: 0 0 91px;
  gap: 3px;
  margin: 0 1px 0 2px;
  padding: 2px 3px 1px 3px;
  border-bottom: 2px solid #9d9d9d;
  border-radius: 0 0 5px 5px;
  background: linear-gradient(#b4d8b4, #f3f6f3 35%, #fbfbfb);
}

.group {
  display: flex;
  flex: none;
  flex-direction: column;
  border: 1px solid #ababab;
  border-radius: 3px;
  overflow: hidden;
  color: #3d3f4f;
}

.group--clipboard {
  width: 150px;
}

.group--font {
  width: 103px;
}

.group--edit {
  width: 141px;
}

.group--doc {
  width: 364px;
}

.group--sign {
  width: 166px;
}

.group__body {
  display: flex;
  flex: 1;
  align-items: flex-start;
  justify-content: space-between;
  padding: 5px 4px 0;
}

.group__body--rows {
  flex-direction: column;
  justify-content: flex-start;
  gap: 8px;
  padding-top: 9px;
}

.group__caption {
  flex: 0 0 14px;
  line-height: 13px;
  text-align: center;
  color: #fff;
  background: linear-gradient(#a9aaaa, #8f9090);
}

.group__stack {
  display: flex;
  flex-direction: column;
  gap: 7px;
}

.group__icons {
  display: flex;
  flex-direction: column;
  gap: 7px;
}

.group__icons--wide {
  gap: 14px;
  padding-top: 7px;
}

.group__sep {
  align-self: stretch;
  width: 1px;
  margin-bottom: 5px;
  background: #b5b5b5;
}

.big {
  text-align: center;
  white-space: nowrap;
}

.big__icon {
  width: 32px;
  height: 32px;
  margin: 0 auto 5px;
}

.big span {
  display: block;
}

.big:disabled,
.small:disabled {
  color: #9b9b9b;
}

.small {
  display: flex;
  align-items: center;
  gap: 4px;
  height: 16px;
  white-space: nowrap;
}

.small svg {
  width: 16px;
  height: 16px;
}

.bar {
  display: flex;
  align-self: flex-start;
  border: 1px solid #9aa9ae;
  background: linear-gradient(#d6dfe1, #c9d4d8 50%, #dbe3e5);
}

.bar__btn {
  display: flex;
  align-items: center;
  justify-content: center;
  width: 23px;
  height: 20px;
  border-right: 1px solid #b4c0c4;
  font: bold 14px/18px "Liberation Serif", serif;
  color: #252b40;
}

.bar__btn svg {
  width: 16px;
  height: 16px;
}

.bar__btn:last-child {
  border-right: 0;
}

.bar__btn sup,
.bar__btn sub {
  align-self: flex-start;
  font-size: 8px;
  line-height: 10px;
  color: #b02020;
}

.bar__btn sub {
  align-self: flex-end;
}

.bar__btn--i {
  font-style: italic;
}

.bar__btn--u {
  text-decoration: underline;
}

.bar__btn--case {
  gap: 5px;
  width: 35px;
  color: #3a68a8;
}

.bar__btn--on {
  background: linear-gradient(#fbc67c, #fdb863 45%, #fde08a);
}

.caret {
  border: 3px solid transparent;
  border-top-color: #777;
  border-bottom: 0;
}

/* open files */
.files {
  display: flex;
  flex: 0 0 25px;
  align-items: flex-end;
  gap: 2px;
  padding: 0 8px 0 5px;
}

.files__tab {
  display: flex;
  align-items: center;
  gap: 2px;
  min-width: 150px;
  height: 20px;
  padding: 0 4px 0 8px;
  border: 1px solid #777;
  border-bottom: 0;
  color: #333;
  background: linear-gradient(#c9d0d8, #b9c2cc 50%, #d9dee3);
}

.files__tab--active {
  height: 22px;
  color: #111;
  background: #ececec;
}

.files__tab svg {
  width: 16px;
  height: 16px;
}

.files__x {
  margin-left: auto;
  padding-left: 4px;
  font: bold 12px/13px "DejaVu Sans", sans-serif;
  color: #555;
}

.files__close {
  margin: 0 0 7px auto;
}

.files__close svg {
  width: 8px;
  height: 8px;
}

/* workspace */
.work {
  display: flex;
  flex: 1;
  flex-direction: column;
  min-height: 0;
  margin: 0 3px 4px 2px;
  border: 1px solid #777;
  border-top: 0;
  background: #e9e9e9;
}

.work__head {
  display: flex;
  flex: 0 0 28px;
  align-items: center;
  justify-content: space-between;
  padding: 0 9px 0 13px;
  background: linear-gradient(#696969, #474747);
}

.work__name {
  font: 12px/16px "Liberation Sans", sans-serif;
  color: #f2f2f2;
}

.push {
  width: 76px;
  height: 24px;
  border: 1px solid #848a92;
  border-radius: 2px;
  color: #111;
  background: linear-gradient(#fdfdfe, #eceef1 45%, #cdd5df 50%, #eef1f4);
}

.push--default {
  border: 2px solid #b4b8bd;
  outline: 1px solid #888;
  outline-offset: -1px;
}

.push--flat {
  height: 18px;
  border-radius: 0;
}

.work__body {
  display: flex;
  flex: 1;
  min-height: 0;
}

/* sidebar */
.side {
  display: flex;
  flex: 0 0 205px;
  flex-direction: column;
  align-items: flex-start;
  padding: 3px 11px 6px 3px;
}

.search {
  display: flex;
  align-items: center;
  align-self: stretch;
  flex: 0 0 22px;
  padding: 0 4px 0 1px;
  margin-right: 2px;
  border: 1px solid #808080;
  background: #fff;
}

.search__input {
  flex: 1;
  min-width: 0;
}

.search__input::placeholder {
  color: #777;
}

.search__icon {
  width: 16px;
  height: 16px;
}

.side__tab {
  flex: 0 0 23px;
  margin: 6px 0 0 3px;
  padding: 0 8px;
  border: 1px solid #777;
  border-bottom: 0;
  border-radius: 2px 2px 0 0;
  background: #f0f0f0;
}

.side__tab svg {
  width: 16px;
  height: 14px;
}

.panel {
  display: flex;
  flex: 1;
  flex-direction: column;
  align-self: stretch;
  min-height: 0;
  border: 1px solid #6e6e6e;
  background: #fff;
  box-shadow: 1px 1px 1px #aaa;
}

.panel__bar {
  display: flex;
  flex: 0 0 26px;
  align-items: center;
  gap: 16px;
  padding: 0 10px;
  color: #fff;
  background: #4f4f4f;
}

.panel__level {
  width: 5px;
  font-size: 12px;
}

.panel__view {
  display: flex;
  flex: 1;
  min-height: 0;
}

.tree {
  flex: 1;
  padding-left: 10px;
  overflow: hidden;
}

.tree__sub {
  margin-left: 19px;
}

.tree__node {
  position: relative;
}

.tree__node::before {
  content: '';
  position: absolute;
  top: 0;
  bottom: 0;
  left: 0;
  border-left: 1px dotted #888;
}

.tree__node:last-child::before {
  bottom: auto;
  height: 8px;
}

.tree__node--on:last-child::before {
  bottom: 0;
  height: auto;
}

.tree__row {
  display: flex;
  align-items: center;
  gap: 4px;
  height: 16px;
  padding-left: 12px;
  position: relative;
}

.tree__row::before {
  content: '';
  position: absolute;
  top: 8px;
  left: 0;
  width: 11px;
  border-top: 1px dotted #888;
}

.tree__row--open::after {
  content: '';
  position: absolute;
  top: 4px;
  left: -4px;
  width: 9px;
  height: 9px;
  border: 1px solid #888;
  border-radius: 1px;
  background: linear-gradient(#2b50a0, #2b50a0) center / 5px 1px no-repeat, #fff;
}

.tree__row svg {
  width: 16px;
  height: 16px;
}

/* scrollbars */
.vscroll {
  display: flex;
  flex: 0 0 16px;
  flex-direction: column;
  align-items: center;
  padding: 6px 0;
  background: #efefef;
}

.vscroll__thumb {
  width: 15px;
  height: 27px;
  margin: auto 0 10px;
  border: 1px solid #8f8f8f;
  border-radius: 2px;
  background: linear-gradient(#777, #777) center 9px / 6px 1px no-repeat, linear-gradient(#777, #777) center 12px / 6px 1px no-repeat, linear-gradient(#777, #777) center 15px / 6px 1px no-repeat, linear-gradient(90deg, #fafafa, #dadada);
}

.vscroll--doc {
  flex-basis: 17px;
}

.vscroll--doc .vscroll__thumb {
  height: 14px;
  margin: 10px 0 auto;
  background: repeating-linear-gradient(#8a8a9a 0 1px, transparent 1px 3px) center / 8px 9px no-repeat, #f2f2f2;
}

.hscroll {
  display: flex;
  flex: 0 0 16px;
  align-items: center;
  padding: 0 24px 0 6px;
  background: #efefef;
}

.hscroll__thumb {
  width: 92px;
  height: 15px;
  margin: 0 auto 0 7px;
  border: 1px solid #9a9a9a;
  border-radius: 2px;
  background: linear-gradient(#666, #666) 42px center / 1px 6px no-repeat, linear-gradient(#666, #666) 45px center / 1px 6px no-repeat, linear-gradient(#666, #666) 48px center / 1px 6px no-repeat, linear-gradient(#fafafa, #cfcfcf);
}

.arrow {
  border: 4px solid transparent;
}

.arrow--up {
  border-top: 0;
  border-bottom-color: #444;
}

.arrow--down {
  border-bottom: 0;
  border-top-color: #444;
}

.arrow--left {
  border-left: 0;
  border-right-color: #333;
}

.arrow--right {
  border-right: 0;
  border-left-color: #333;
}

.vscroll--doc .arrow {
  border-bottom-color: #45597f;
}

.vscroll--doc .arrow--down {
  border-top-color: #45597f;
}

/* editor */
.editor {
  display: flex;
  flex: 1;
  flex-direction: column;
  min-width: 0;
  padding-right: 3px;
}

.editor__view {
  display: flex;
  flex: 1;
  min-height: 0;
  border: 1px solid #6b6b6b;
}

.desk {
  position: relative;
  flex: 1;
  min-width: 0;
  overflow: hidden;
  background: linear-gradient(#525252, #4b4b4b 45%, #333 70%, #070707);
}

.desk__curve {
  position: absolute;
  top: 0;
  left: 0;
  width: 100%;
  height: 200px;
}

/* the printed sheet */
.paper {
  position: relative;
  max-width: 776px;
  min-height: 100%;
  margin: 0 auto;
  padding: 13px 43px 0 48px;
  font: 15px/17px "Liberation Serif", serif;
  color: #000;
  background: #fff;
  box-shadow: 0 0 3px #000;
}

.para {
  margin-bottom: 8px;
}

.line {
  height: 17px;
  white-space: nowrap;
  text-align: justify;
  text-align-last: justify;
}

.line--end {
  text-align-last: left;
}

.line--cut {
  display: flex;
  justify-content: space-between;
  text-align-last: left;
}

.para--lead .line:first-child {
  padding-left: 16px;
}

.para--section .line:first-child {
  padding-left: 23px;
}

.para--item .line {
  padding-left: 23px;
}

.para--item .line:first-child {
  padding-left: 7px;
}

.editor__foot {
  display: flex;
  flex: 0 0 26px;
  align-items: flex-start;
  gap: 2px;
  padding: 0 1px 0 3px;
}

.view-tab {
  display: flex;
  align-items: center;
  gap: 4px;
  height: 24px;
  padding: 0 7px;
  border: 1px solid #777;
  border-top: 0;
  color: #333;
  background: linear-gradient(#d3d8de, #bfc7d1 50%, #dfe3e8);
}

.view-tab--active {
  height: 26px;
  color: #111;
  background: #f0f0f0;
}

.view-tab svg {
  width: 16px;
  height: 16px;
}

.editor__tools {
  display: flex;
  gap: 6px;
  margin: 6px 0 0 auto;
}

.editor__tools svg {
  width: 16px;
  height: 16px;
}

/* status bar */
.status {
  display: flex;
  flex: 0 0 20px;
  color: #f4f4f4;
  background: linear-gradient(#434854, #3d414b 35%, #2d2d2d 40%, #333);
}

.status__state {
  flex: 1;
  margin-left: 13px;
  padding: 6px 0 0 4px;
  border-left: 1px solid #666;
}

.status__info {
  display: flex;
  align-items: center;
  padding: 5px 2px 0 15px;
  border-left: 1px solid #777;
  background: linear-gradient(#a0a0a0, #7d7f82 30%, #565b62 90%);
}

.status__cell {
  padding: 0 5px 0 4px;
  border-left: 1px solid #333;
}

.status__zoom {
  padding: 0 3px;
}

.round svg {
  width: 14px;
  height: 14px;
  fill: #b5b7ba;
  stroke: #444;
}

.zoom {
  appearance: none;
  width: 118px;
  height: 14px;
  background: linear-gradient(#333, #333) center / 100% 1px no-repeat, linear-gradient(#ddd, #ddd) center / 1px 8px no-repeat;
}

.zoom::-webkit-slider-thumb {
  appearance: none;
  width: 10px;
  height: 14px;
  border: 1px solid #777;
  background: linear-gradient(90deg, #fff4c8, #f2c75c);
}

.status__grip {
  width: 12px;
  height: 12px;
  margin-left: 8px;
}

/* dialog window */
.dialog {
  position: absolute;
  top: 256px;
  left: 446px;
  width: 551px;
  border: 3px solid #34373f;
  border-top: 1px solid #2c2f36;
  background: #fff;
}

.dialog__title {
  display: flex;
  align-items: center;
  justify-content: space-between;
  height: 28px;
  padding: 0 7px;
  font-size: 12px;
  color: #f2f2f2;
  background: linear-gradient(#434854, #3d414b 27%, #2c2c2c 30%, #454545);
}

.dialog__close svg {
  width: 10px;
  height: 10px;
}

.dialog__tools {
  height: 65px;
  padding: 11px 5px 0;
  border-top: 1px solid #24262b;
  background: linear-gradient(#949494, #444 75%);
}

.dialog__icons {
  display: flex;
  gap: 9px;
}

.dialog__icons svg {
  height: 24px;
}

.dialog__heading {
  margin-top: 11px;
  font-weight: bold;
  color: #fff;
}

.form {
  display: grid;
  grid-template-columns: 204px 1fr;
  grid-template-rows: repeat(3, 26px) repeat(3, 25px) repeat(4, 32px);
  column-gap: 6px;
  align-items: center;
  padding-right: 3px;
  height: 301px;
}

.form__label {
  justify-self: end;
  font-weight: bold;
  color: #000;
  white-space: nowrap;
}

.form__select {
  width: 100%;
  height: 20px;
  appearance: none;
  padding: 0 1px;
  border: 1px solid #848484;
  color: #1b1b3a;
  background: conic-gradient(from -45deg at 50% 100%, #333 90deg, transparent 0) calc(100% - 4px) 9px / 6px 3px no-repeat, #fff;
}

.form__mark {
  position: relative;
}

.form__mark .form__select {
  display: block;
}

/* dotted focus box inside the select */
.form__mark::before {
  content: '';
  position: absolute;
  top: 2px;
  left: 2px;
  right: 15px;
  height: 16px;
  border: 1px dotted #000;
}

/* red highlight round the row */
.form__mark::after {
  content: '';
  position: absolute;
  top: -7px;
  left: -74px;
  right: -10px;
  bottom: -8px;
  border: 4px solid #f00;
  border-radius: 12px;
}

.form__check {
  width: 12px;
  height: 12px;
  margin-left: 3px;
  appearance: none;
  border: 1px solid #7e7e7e;
  background: linear-gradient(135deg, #c6cbd2, #fff);
  box-shadow: inset 0 0 0 1px #f2f2f2;
}

.form__check:checked::before {
  content: '';
  display: block;
  width: 4px;
  height: 7px;
  margin: 0 0 0 3px;
  border: solid #3d64a0;
  border-width: 0 2px 2px 0;
  transform: rotate(40deg);
}

.dialog__foot {
  display: flex;
  justify-content: flex-end;
  gap: 5px;
  height: 44px;
  padding: 9px 8px;
  background: #eff0f2;
}

.pointer {
  position: absolute;
  top: 122px;
  left: 595px;
  width: 40px;
  height: 160px;
}
```
